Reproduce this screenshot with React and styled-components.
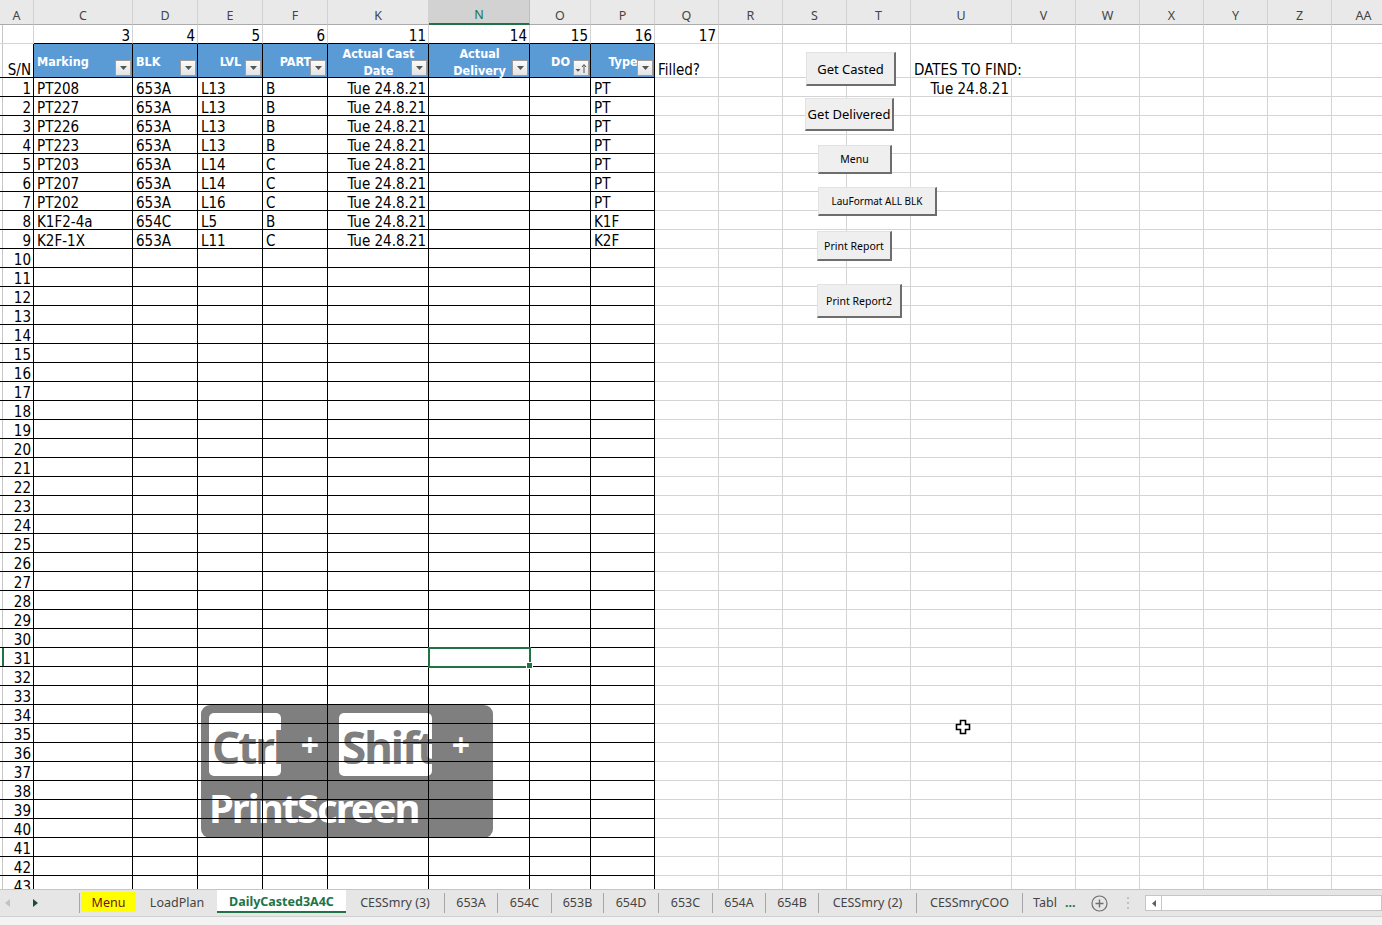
import React from "react";
import styled, { createGlobalStyle } from "styled-components";

const GlobalStyle = createGlobalStyle`
  html, body {
    margin: 0;
    padding: 0;
    background: #fff;
    overflow: hidden;
  }
`;

const BLACK = "#000";
const GRID = "#d4d4d4";
const GREEN = "#217346";
const CELL_FONT = `"DejaVu Sans Condensed", "Liberation Sans", Arial, sans-serif`;
const UI_FONT = `"Noto Sans", "Open Sans", sans-serif`;

const COLS = [
  { id: "A", w: 34 },
  { id: "C", w: 99 },
  { id: "D", w: 65 },
  { id: "E", w: 65 },
  { id: "F", w: 65 },
  { id: "K", w: 101 },
  { id: "N", w: 101 },
  { id: "O", w: 61 },
  { id: "P", w: 64 },
  { id: "Q", w: 64 },
  { id: "R", w: 64 },
  { id: "S", w: 64 },
  { id: "T", w: 64 },
  { id: "U", w: 101 },
  { id: "V", w: 64 },
  { id: "W", w: 64 },
  { id: "X", w: 64 },
  { id: "Y", w: 64 },
  { id: "Z", w: 64 },
  { id: "AA", w: 64 },
];

const NUMS = { C: "3", D: "4", E: "5", F: "6", K: "11", N: "14", O: "15", P: "16", Q: "17" };

const HEADERS = {
  C: { label: ["Marking"], align: "left" },
  D: { label: ["BLK"], align: "left" },
  E: { label: ["LVL"], align: "center" },
  F: { label: ["PART"], align: "center" },
  K: { label: ["Actual Cast", "Date"], align: "center" },
  N: { label: ["Actual", "Delivery"], align: "center" },
  O: { label: ["DO"], align: "center", sorted: true },
  P: { label: ["Type"], align: "center" },
};

const DATA = [
  ["PT208", "653A", "L13", "B", "Tue 24.8.21", "", "", "PT"],
  ["PT227", "653A", "L13", "B", "Tue 24.8.21", "", "", "PT"],
  ["PT226", "653A", "L13", "B", "Tue 24.8.21", "", "", "PT"],
  ["PT223", "653A", "L13", "B", "Tue 24.8.21", "", "", "PT"],
  ["PT203", "653A", "L14", "C", "Tue 24.8.21", "", "", "PT"],
  ["PT207", "653A", "L14", "C", "Tue 24.8.21", "", "", "PT"],
  ["PT202", "653A", "L16", "C", "Tue 24.8.21", "", "", "PT"],
  ["K1F2-4a", "654C", "L5", "B", "Tue 24.8.21", "", "", "K1F"],
  ["K2F-1X", "653A", "L11", "C", "Tue 24.8.21", "", "", "K2F"],
];

const CONTROLS = [
  { label: "Get Casted", x: 806, y: 52, w: 90, h: 34, fs: 13 },
  { label: "Get Delivered", x: 805, y: 98, w: 89, h: 33, fs: 13 },
  { label: "Menu", x: 818, y: 145, w: 74, h: 29, fs: 10.5 },
  { label: "LauFormat ALL BLK", x: 818, y: 187, w: 119, h: 29, fs: 10 },
  { label: "Print Report", x: 817, y: 231, w: 75, h: 30, fs: 10.5 },
  { label: "Print Report2", x: 817, y: 284, w: 85, h: 34, fs: 10.5 },
];

const TABS = [
  { name: "Menu", w: 57, kind: "yellow" },
  { name: "LoadPlan", w: 80 },
  { name: "DailyCasted3A4C", w: 129, kind: "active" },
  { name: "CESSmry (3)", w: 98 },
  { name: "653A", w: 52 },
  { name: "654C", w: 53 },
  { name: "653B", w: 51 },
  { name: "654D", w: 54 },
  { name: "653C", w: 53 },
  { name: "654A", w: 52 },
  { name: "654B", w: 52 },
  { name: "CESSmry (2)", w: 97 },
  { name: "CESSmryCOO", w: 105 },
];

const Page = styled.div`
  display: flex;
  flex-direction: column;
  width: 1382px;
  height: 925px;
  overflow: hidden;
`;

const Sheet = styled.div`
  position: relative;
  height: 889px;
  flex: none;
  overflow: hidden;
  background: #fff;
`;

const Grid = styled.div`
  position: relative;
  z-index: 1;
  display: grid;
  grid-template-columns: ${(p) => p.$cols};
  grid-template-rows: 25px 19px 34px;
  grid-auto-rows: 19px;
  width: max-content;
`;

const ColHead = styled.div`
  box-sizing: border-box;
  display: flex;
  align-items: center;
  justify-content: center;
  padding-top: 7px;
  background: ${(p) => (p.$active ? "#d2d2d2" : "#e9e9e9")};
  color: ${(p) => (p.$active ? GREEN : "#444")};
  border-right: 1px solid ${(p) => (p.$active ? "#bdbdbd" : "#d2d2d2")};
  border-bottom: ${(p) => (p.$active ? `2px solid ${GREEN}` : "1px solid #ababab")};
  font-family: ${UI_FONT};
  font-size: 12.5px;
  line-height: 14px;
`;

const gutter = (c) =>
  c === "green"
    ? `linear-gradient(to right, transparent 2px, ${GREEN} 2px, ${GREEN} 4px, transparent 4px)`
    : c === "gray"
    ? "linear-gradient(to right, transparent 2px, #c6c6c6 2px, #c6c6c6 3px, transparent 3px)"
    : "transparent";

const Cell = styled.div`
  box-sizing: border-box;
  position: relative;
  display: flex;
  align-items: flex-end;
  justify-content: ${(p) =>
    p.$align === "right" ? "flex-end" : p.$align === "center" ? "center" : "flex-start"};
  padding: 0 2px 0 3px;
  border-right: 1px solid ${(p) => p.$rb};
  border-bottom: 1px solid ${(p) => p.$bb};
  background: ${(p) => gutter(p.$gutter)};
  white-space: nowrap;
  font-family: ${CELL_FONT};
  font-size: 15px;
  line-height: 14px;
  color: #000;
  ${(p) =>
    p.$selected &&
    `
    z-index: 2;
    &::after {
      content: "";
      position: absolute;
      left: -1px; top: -1px; right: -2px; bottom: -2px;
      border: 2px solid ${GREEN};
    }
    &::before {
      content: "";
      position: absolute;
      right: -4px; bottom: -3px;
      width: 5px; height: 5px;
      background: ${GREEN};
      border: 1px solid #fff;
      z-index: 3;
    }
  `}
`;

const HeaderCell = styled.div`
  box-sizing: border-box;
  position: relative;
  display: flex;
  align-items: center;
  justify-content: ${(p) => (p.$align === "left" ? "flex-start" : "center")};
  padding: 2px 2px 0 3px;
  background: #5b9bd5;
  border-right: 1px solid ${BLACK};
  border-bottom: 1px solid ${BLACK};
  color: #fff;
  font-family: ${CELL_FONT};
  font-weight: bold;
  font-size: 12.5px;
  line-height: 17px;
  text-align: center;
  white-space: nowrap;
`;

const FilterButton = styled.span`
  position: absolute;
  right: 1px;
  bottom: 1px;
  width: 16px;
  height: 16px;
  box-sizing: border-box;
  border: 1px solid #9d9d9d;
  background: linear-gradient(#fbfbfb, #e3e3e3);
  display: flex;
  align-items: center;
  justify-content: center;
`;

const Overlay = styled.div`
  position: absolute;
  left: 201px;
  top: 705px;
  width: 292px;
  height: 133px;
  box-sizing: border-box;
  padding: 8px 0 0 8px;
  border-radius: 9px;
  background: #7f7f7f;
  display: flex;
  flex-direction: column;
  font-family: ${UI_FONT};
  font-weight: bold;
  z-index: 0;
`;

const KeyRow = styled.div`
  display: flex;
  align-items: center;
  height: 63px;
`;

const Key = styled.div`
  width: ${(p) => p.$w}px;
  height: 63px;
  box-sizing: border-box;
  padding-left: 3px;
  border-radius: 5px;
  background: #fff;
  overflow: hidden;
  color: #7f7f7f;
  font-size: 44px;
  line-height: 68px;
  letter-spacing: -2px;
  white-space: nowrap;
`;

const Plus = styled.div`
  width: 58px;
  text-align: center;
  color: #fff;
  font-size: 32px;
  line-height: 68px;
`;

const PrintScreen = styled.div`
  margin-top: 8px;
  color: #fff;
  font-size: 40px;
  line-height: 48px;
  letter-spacing: -2px;
  white-space: nowrap;
`;

const FormButton = styled.button`
  position: absolute;
  z-index: 3;
  left: ${(p) => p.$x}px;
  top: ${(p) => p.$y}px;
  width: ${(p) => p.$w}px;
  height: ${(p) => p.$h}px;
  box-sizing: border-box;
  padding: 0;
  background: #efefef;
  border-style: solid;
  border-width: 1px 2px 2px 1px;
  border-color: #e2e2e2 #6d6d6d #6d6d6d #e2e2e2;
  font-family: ${UI_FONT};
  font-size: ${(p) => p.$fs}px;
  color: #000;
  white-space: nowrap;
`;

const Cursor = styled.svg`
  position: absolute;
  z-index: 4;
  left: 955px;
  top: 719px;
`;

const TabBar = styled.div`
  display: flex;
  align-items: stretch;
  height: 28px;
  box-sizing: border-box;
  padding-bottom: 3px;
  background: #e6e6e6;
  border-top: 1px solid #c6c6c6;
  border-bottom: 1px solid #d0d0d0;
  font-family: ${UI_FONT};
  font-size: 12.5px;
  color: #444;
`;

const Nav = styled.div`
  width: 79px;
  display: flex;
  align-items: center;
  gap: 23px;
  padding: 2px 0 0 5px;
  box-sizing: border-box;
`;

const Sep = styled.div`
  width: 1px;
  align-self: center;
  height: 20px;
  margin-top: 2px;
  background: #a6a6a6;
  flex: none;
`;

const Tab = styled.div`
  width: ${(p) => p.$w}px;
  flex: none;
  box-sizing: border-box;
  display: flex;
  align-items: center;
  justify-content: center;
  padding-top: 2px;
  white-space: nowrap;
  ${(p) =>
    p.$kind === "active" &&
    `
    background: #fff;
    color: ${GREEN};
    font-weight: bold;
    border-bottom: 2px solid ${GREEN};
  `}
`;

const YellowTab = styled.div`
  flex: 1;
  align-self: stretch;
  margin: 0 1px 1px;
  background: #ffff00;
  color: #6b1414;
  display: flex;
  align-items: center;
  justify-content: center;
`;

const MoreTab = styled.div`
  width: 42px;
  flex: none;
  box-sizing: border-box;
  padding: 2px 0 0 10px;
  display: flex;
  align-items: center;
  overflow: hidden;
  white-space: nowrap;
`;

const Dots = styled.span`
  width: 16px;
  display: flex;
  align-items: center;
  color: ${GREEN};
  font-weight: bold;
  padding-top: 2px;
`;

const AddSheet = styled.svg`
  align-self: center;
  margin: 3px 0 0 10px;
`;

const VDots = styled.svg`
  align-self: center;
  margin: 3px 0 0 18px;
`;

const Scroll = styled.div`
  margin: 3px 0 0 15px;
  flex: 1;
  align-self: center;
  height: 16px;
  box-sizing: border-box;
  border: 1px solid #c6c6c6;
  background: #fff;
  display: flex;
`;

const ScrollArrow = styled.div`
  width: 15px;
  border-right: 1px solid #c6c6c6;
  display: flex;
  align-items: center;
  justify-content: center;
`;

const StatusBar = styled.div`
  flex: 1;
  background: #f3f3f3;
`;

const Tri = ({ dir = "down", color = "#555", w = 8, h = 5 }) => {
  const d =
    dir === "down"
      ? `M0 0H${w}L${w / 2} ${h}Z`
      : dir === "left"
      ? `M${w} 0V${h}L0 ${h / 2}Z`
      : `M0 0V${h}L${w} ${h / 2}Z`;
  return (
    <svg width={w} height={h} viewBox={`0 0 ${w} ${h}`}>
      <path d={d} fill={color} />
    </svg>
  );
};

const SortIcon = () => (
  <svg width="12" height="11" viewBox="0 0 12 11">
    <path d="M0.5 6H5.5L3 8.8Z" fill="#555" />
    <path d="M9 10V2" stroke="#555" strokeWidth="1" fill="none" />
    <path d="M7 4L9 1.5L11 4" stroke="#555" strokeWidth="1" fill="none" />
  </svg>
);

export default function App() {
  const cells = [];

  COLS.forEach((c) => {
    cells.push(
      <ColHead key={`h-${c.id}`} $active={c.id === "N"}>
        {c.id}
      </ColHead>
    );
  });

  COLS.forEach((c, i) => {
    cells.push(
      <Cell
        key={`n-${c.id}`}
        $rb={GRID}
        $bb={i >= 1 && i <= 8 ? BLACK : GRID}
        $align="right"
        $gutter={i === 0 ? "gray" : null}
      >
        {NUMS[c.id]}
      </Cell>
    );
  });

  COLS.forEach((c, i) => {
    const h = HEADERS[c.id];
    if (h) {
      cells.push(
        <HeaderCell key={`t-${c.id}`} $align={h.align}>
          <span>
            {h.label.map((l, j) => (
              <div key={j}>{l}</div>
            ))}
          </span>
          <FilterButton>{h.sorted ? <SortIcon /> : <Tri w={7} h={4} />}</FilterButton>
        </HeaderCell>
      );
      return;
    }
    let text = null;
    let align = "left";
    let rb = i <= 8 ? BLACK : GRID;
    if (c.id === "A") {
      text = "S/N";
      align = "right";
    }
    if (c.id === "Q") text = "Filled?";
    if (c.id === "U") {
      text = "DATES TO FIND:";
      rb = "#fff";
    }
    cells.push(
      <Cell
        key={`t-${c.id}`}
        $rb={rb}
        $bb={i <= 8 ? BLACK : GRID}
        $align={align}
        $gutter={i === 0 ? "gray" : null}
      >
        {text}
      </Cell>
    );
  });

  for (let r = 1; r <= 43; r++) {
    const row = DATA[r - 1];
    COLS.forEach((c, i) => {
      let text = null;
      let align = "left";
      if (i === 0) {
        text = r;
        align = "right";
      } else if (i <= 8 && row) {
        text = row[i - 1];
        if (c.id === "K") align = "right";
      } else if (c.id === "U" && r === 1) {
        text = "Tue 24.8.21";
        align = "right";
      }
      cells.push(
        <Cell
          key={`${r}-${c.id}`}
          $rb={i <= 8 ? BLACK : GRID}
          $bb={i <= 8 ? BLACK : GRID}
          $align={align}
          $gutter={i === 0 ? (r === 31 ? "green" : "gray") : null}
          $selected={r === 31 && c.id === "N"}
        >
          {text}
        </Cell>
      );
    });
  }

  const tabs = [];
  TABS.forEach((t, i) => {
    const prev = TABS[i - 1];
    if (t.kind !== "active" && (!prev || prev.kind !== "active") && (i === 0 || i > 1)) {
      tabs.push(<Sep key={`s-${i}`} />);
    }
    tabs.push(
      <Tab key={t.name} $w={t.w} $kind={t.kind}>
        {t.kind === "yellow" ? <YellowTab>{t.name}</YellowTab> : t.name}
      </Tab>
    );
  });

  return (
    <Page>
      <GlobalStyle />
      <Sheet>
        <Overlay>
          <KeyRow>
            <Key $w={72}>Ctrl</Key>
            <Plus>+</Plus>
            <Key $w={93}>Shift</Key>
            <Plus>+</Plus>
          </KeyRow>
          <PrintScreen>PrintScreen</PrintScreen>
        </Overlay>
        <Grid $cols={COLS.map((c) => `${c.w}px`).join(" ")}>{cells}</Grid>
        {CONTROLS.map((b) => (
          <FormButton key={b.label} $x={b.x} $y={b.y} $w={b.w} $h={b.h} $fs={b.fs}>
            {b.label}
          </FormButton>
        ))}
        <Cursor width="16" height="16" viewBox="0 0 16 16">
          <path
            d="M5.5 1.5H10.5V5.5H14.5V10.5H10.5V14.5H5.5V10.5H1.5V5.5H5.5Z"
            fill="#fff"
            stroke="#000"
            strokeWidth="1.6"
          />
        </Cursor>
      </Sheet>
      <TabBar>
        <Nav>
          <Tri dir="left" color="#c2c2c2" w={5} h={8} />
          <Tri dir="right" color="#1e4d36" w={5} h={8} />
        </Nav>
        {tabs}
        <Sep />
        <MoreTab>Tabl</MoreTab>
        <Dots>...</Dots>
        <AddSheet width="17" height="17" viewBox="0 0 17 17">
          <circle cx="8.5" cy="8.5" r="7.5" fill="none" stroke="#6f6f6f" strokeWidth="1.2" />
          <path d="M8.5 4.5V12.5M4.5 8.5H12.5" stroke="#6f6f6f" strokeWidth="1.4" />
        </AddSheet>
        <VDots width="4" height="14" viewBox="0 0 4 14">
          <circle cx="2" cy="2" r="1" fill="#b3b3b3" />
          <circle cx="2" cy="7" r="1" fill="#b3b3b3" />
          <circle cx="2" cy="12" r="1" fill="#b3b3b3" />
        </VDots>
        <Scroll>
          <ScrollArrow>
            <Tri dir="left" color="#606060" w={4} h={7} />
          </ScrollArrow>
        </Scroll>
      </TabBar>
      <StatusBar />
    </Page>
  );
}
